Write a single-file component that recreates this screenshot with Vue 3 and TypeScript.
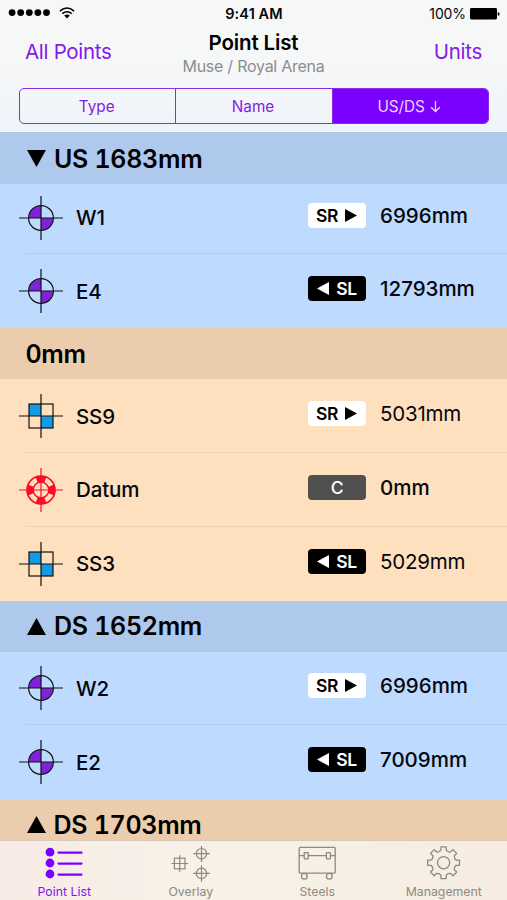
<script setup lang="ts">
type Side = 'SR' | 'SL' | 'C'
type Kind = 'round' | 'square' | 'datum'

interface Point {
  name: string
  kind: Kind
  side: Side
  distance: string
  light?: boolean
}

interface Section {
  title: string
  arrow?: 'down' | 'up'
  tone: 'blue' | 'peach'
  points: Point[]
}

const sections: Section[] = [
  {
    title: 'US 1683mm',
    arrow: 'down',
    tone: 'blue',
    points: [
      { name: 'W1', kind: 'round', side: 'SR', distance: '6996mm' },
      { name: 'E4', kind: 'round', side: 'SL', distance: '12793mm' },
    ],
  },
  {
    title: '0mm',
    tone: 'peach',
    points: [
      { name: 'SS9', kind: 'square', side: 'SR', distance: '5031mm', light: true },
      { name: 'Datum', kind: 'datum', side: 'C', distance: '0mm' },
      { name: 'SS3', kind: 'square', side: 'SL', distance: '5029mm', light: true },
    ],
  },
  {
    title: 'DS 1652mm',
    arrow: 'up',
    tone: 'blue',
    points: [
      { name: 'W2', kind: 'round', side: 'SR', distance: '6996mm' },
      { name: 'E2', kind: 'round', side: 'SL', distance: '7009mm' },
    ],
  },
  { title: 'DS 1703mm', arrow: 'up', tone: 'peach', points: [] },
]

// Eight-toothed gear outline centred on the origin, with rounded gullets
function gearPath(): string {
  const at = (r: number, deg: number): string => {
    const a = (deg * Math.PI) / 180
    return `${(r * Math.cos(a)).toFixed(2)} ${(r * Math.sin(a)).toFixed(2)}`
  }
  let d = ''
  for (let i = 0; i < 8; i++) {
    const c = i * 45 - 90
    d += `${i ? 'L' : 'M'}${at(12.8, c - 12)}L${at(16.1, c - 9.5)}L${at(16.1, c + 9.5)}`
    d += `L${at(12.8, c + 12)}Q${at(11.2, c + 22.5)} ${at(12.8, c + 33)}`
  }
  return d + 'Z'
}
const gear = gearPath()
</script>

<template>
  <div class="screen">
    <header class="top">
      <div class="status">
        <div class="carrier">
          <svg class="dots" width="42" height="8" viewBox="0 0 42 8">
            <circle v-for="i in 5" :key="i" :cx="4.1 + (i - 1) * 8.6" cy="3.6" r="3.4" />
          </svg>
          <svg class="wifi" width="16" height="12" viewBox="0 0 16 12">
            <path d="M.9 4.1Q8-2 15.1 4.1M3.3 6.7Q8 2.8 12.7 6.7" fill="none" stroke="#000" stroke-width="1.5" />
            <path d="M8 11.4L5.2 8.6Q8 6.5 10.8 8.6Z" />
          </svg>
        </div>
        <span class="clock">9:41 AM</span>
        <div class="power">
          <span>100%</span>
          <svg width="30" height="12" viewBox="0 0 30 12">
            <rect x="0" y="0" width="27" height="11.4" rx="1.4" />
            <path d="M27.8 4Q29.6 4.5 29.6 6T27.8 8Z" />
          </svg>
        </div>
      </div>
      <div class="nav">
        <a class="action">All Points</a>
        <div class="heading">
          <h1>Point List</h1>
          <p>Muse / Royal Arena</p>
        </div>
        <a class="action units">Units</a>
      </div>
      <div class="segments">
        <button>Type</button>
        <button>Name</button>
        <button class="on">US/DS <svg width="11" height="13" viewBox="0 0 11 13"><path d="M5.5 1V11.3M1.2 7.2L5.5 11.5L9.8 7.2" fill="none" stroke="currentColor" stroke-width="1.3" /></svg></button>
      </div>
    </header>

    <main class="list">
      <section v-for="s in sections" :key="s.title" :class="s.tone">
        <h2>
          <svg v-if="s.arrow" width="19" height="17" viewBox="0 0 19 17">
            <path :d="s.arrow === 'down' ? 'M0 0H19L9.5 17Z' : 'M0 17H19L9.5 0Z'" />
          </svg>
          <span>{{ s.title }}</span>
        </h2>
        <ul>
          <li v-for="p in s.points" :key="p.name">
            <svg class="marker" width="44" height="44" viewBox="-22 -22 44 44">
              <g v-if="p.kind === 'round'" stroke="#111" stroke-width="1.2">
                <path d="M0 0H-12A12 12 0 0 1 0-12ZM0 0H12A12 12 0 0 1 0 12Z" fill="#8022dc" stroke="none" />
                <circle r="12.4" fill="none" />
                <path d="M-22 0H22M0-22V22" />
              </g>
              <g v-else-if="p.kind === 'square'" stroke="#111" stroke-width="1.2">
                <path d="M-12-12H0V0H-12ZM0 0H12V12H0Z" fill="#149ae2" stroke="none" />
                <rect x="-12" y="-12" width="24" height="24" fill="none" />
                <path d="M-22 0H22M0-22V22" />
              </g>
              <g v-else stroke="#fb0d25" fill="none">
                <circle r="14" stroke-width="1.6" />
                <circle r="7.9" stroke-width="1.5" />
                <circle r="11" stroke-width="6.6" pathLength="360" stroke-dasharray="46 44" stroke-dashoffset="23" />
                <path d="M-22 0H22M0-22V22" stroke-width="1.2" />
              </g>
            </svg>
            <span class="name">{{ p.name }}</span>
            <div class="place">
              <span class="badge" :class="p.side.toLowerCase()">
                <svg v-if="p.side === 'SL'" width="12" height="13" viewBox="0 0 12 13"><path d="M12 0V13L0 6.5Z" fill="currentColor" /></svg>
                <span>{{ p.side }}</span>
                <svg v-if="p.side === 'SR'" width="12" height="13" viewBox="0 0 12 13"><path d="M0 0V13L12 6.5Z" fill="currentColor" /></svg>
              </span>
              <span class="distance" :class="{ light: p.light }">{{ p.distance }}</span>
            </div>
          </li>
        </ul>
      </section>
    </main>

    <footer class="tabs">
      <a class="tab active">
        <svg width="44" height="36" viewBox="0 0 44 36">
          <g fill="#7a00ff">
            <circle cx="8" cy="6.2" r="4.4" /><circle cx="8" cy="17" r="4.4" /><circle cx="8" cy="28" r="4.4" />
          </g>
          <path d="M16.5 6.7H39.5M16.5 17.6H39.5M16.5 28.6H39.5" stroke="#7a00ff" stroke-width="2.2" stroke-linecap="round" />
        </svg>
        <span>Point List</span>
      </a>
      <a class="tab">
        <svg width="44" height="36" viewBox="0 0 44 36" fill="none" stroke="#8d8981" stroke-width="1.2">
          <rect x="5.4" y="12.2" width="10.6" height="10.6" />
          <path d="M2.4 17.5H19M10.7 9.2V25.8" />
          <circle cx="32.5" cy="7.7" r="5.2" /><path d="M24.2 7.7H40.8M32.5-.5V16" />
          <circle cx="32.5" cy="27.4" r="5.2" /><path d="M24.2 27.4H40.8M32.5 19.2V35.7" />
        </svg>
        <span>Overlay</span>
      </a>
      <a class="tab">
        <svg width="44" height="36" viewBox="0 0 44 36" fill="none" stroke="#8d8981" stroke-width="1.3">
          <rect x="4.2" y="1.4" width="36" height="25.8" rx="1" />
          <path d="M4.2 9.6H9.2M13.2 9.6H31.4M35.4 9.6H40.2" />
          <rect x="9.2" y="6.6" width="4" height="6.2" rx=".5" /><rect x="31.4" y="6.6" width="4" height="6.2" rx=".5" />
          <circle cx="9.3" cy="30.2" r="2.9" /><circle cx="34.3" cy="30.2" r="2.9" />
        </svg>
        <span>Steels</span>
      </a>
      <a class="tab">
        <svg width="44" height="36" viewBox="0 0 44 36" fill="none" stroke="#8d8981" stroke-width="1.3" stroke-linejoin="round">
          <g transform="translate(21.6 16.7)"><path :d="gear" /><circle r="6.1" /></g>
        </svg>
        <span>Management</span>
      </a>
    </footer>
  </div>
</template>

<style>
body {
  margin: 0;
}
</style>

<style scoped>
.screen {
  width: 507px;
  height: 900px;
  display: flex;
  flex-direction: column;
  overflow: hidden;
  font-family: Inter, "Liberation Sans", sans-serif;
  color: #05070c;
}
.top {
  height: 133px;
  flex: none;
  box-sizing: border-box;
  border-bottom: 1px solid #b4c4d8;
  background: linear-gradient(#f7f7f7, #f6f7f8 50%, #eef4fa);
}
.status {
  height: 27px;
  display: grid;
  grid-template-columns: 1fr auto 1fr;
  align-items: center;
  padding: 0 7px 0 8px;
  box-sizing: border-box;
}
.carrier {
  display: flex;
  align-items: center;
  gap: 9px;
  padding-bottom: 2px;
}
.clock {
  font-size: 14.5px;
  font-weight: 600;
  letter-spacing: 0.1px;
}
.power {
  display: flex;
  align-items: center;
  justify-content: flex-end;
  gap: 4px;
  font-size: 14px;
  letter-spacing: -0.1px;
}
.nav {
  height: 61px;
  display: grid;
  grid-template-columns: 1fr auto 1fr;
  padding: 0 25px;
}
.action {
  color: #8519e6;
  font-size: 20.5px;
  line-height: 50px;
  letter-spacing: -0.3px;
}
.units {
  text-align: right;
}
.heading {
  text-align: center;
}
h1 {
  margin: 3px 0 0;
  font-size: 20.5px;
  font-weight: 600;
  line-height: 25px;
  letter-spacing: -0.15px;
  color: #000;
}
p {
  margin: 0;
  font-size: 16px;
  line-height: 22px;
  letter-spacing: -0.25px;
  color: #8c8d8e;
}
.segments {
  height: 36px;
  margin: 0 18px 0 19px;
  display: flex;
  box-sizing: border-box;
  border: 1.5px solid #8b2be8;
  border-radius: 5px;
  overflow: hidden;
}
button {
  flex: 1;
  padding: 0 2px 0 0;
  border: 0;
  background: none;
  font: 400 15.3px Inter, sans-serif;
  color: #8519e6;
}
button + button {
  border-left: 1px solid #8b2be8;
}
button.on {
  background: #7a00ff;
  color: #ead6ff;
}
button svg {
  margin-left: 1px;
  vertical-align: -1px;
}
.list {
  flex: 1;
  min-height: 0;
  overflow: hidden;
}
h2 {
  position: relative;
  z-index: 1;
  height: 51px;
  margin: 0;
  padding-left: 26px;
  display: flex;
  align-items: center;
  gap: 8px;
  font-size: 25px;
  font-weight: 600;
  letter-spacing: -0.3px;
  font-feature-settings: "tnum";
  color: #000;
}
h2 svg {
  padding-left: 1px;
}
ul {
  margin: 0;
  padding: 0;
  list-style: none;
}
section:first-child ul {
  margin-top: -3.4px;
}
.blue {
  background: #bedaff;
}
.blue h2 {
  background: #aec9ec;
}
.peach {
  background: #fedfbe;
}
.peach h2 {
  background: #ebcdae;
}
.peach h2 span {
  margin-left: -0.5px;
}
li {
  height: 73.8px;
  display: flex;
  align-items: center;
  padding-left: 19px;
  background: linear-gradient(rgba(60, 60, 90, 0.09), rgba(60, 60, 90, 0.09)) 26px 100% / 100% 1px no-repeat;
}
li:last-child {
  background: none;
}
.name {
  flex: 1;
  margin-left: 13px;
  font-size: 20.5px;
  font-weight: 500;
  letter-spacing: -0.15px;
}
.place {
  width: 199px;
  display: flex;
  align-items: center;
  gap: 14px;
  padding-bottom: 5px;
}
.badge {
  width: 58px;
  height: 25px;
  display: flex;
  align-items: center;
  justify-content: center;
  gap: 7px;
  border-radius: 4px;
  font-size: 17.5px;
  font-weight: 600;
  letter-spacing: -0.4px;
}
.sr {
  background: #fff;
  color: #000;
  padding-right: 1px;
  box-sizing: border-box;
}
.sl {
  background: #000;
  color: #fff;
}
.c {
  background: #505050;
  color: #fff;
  font-weight: 500;
}
.distance {
  font-size: 20.5px;
  font-weight: 500;
}
.light {
  font-weight: 400;
  letter-spacing: -0.2px;
}
.tabs {
  flex: none;
  height: 60px;
  box-sizing: border-box;
  border-top: 1px solid #d6c8b8;
  padding-left: 1px;
  display: grid;
  grid-template-columns: repeat(4, 126.5px);
  background: linear-gradient(90deg, #f8ebe5, #f7f1e8 35%, #f6f0e5 60%, #f7ece2);
}
.tab {
  display: flex;
  flex-direction: column;
  align-items: center;
  padding-top: 5px;
  font-size: 12.3px;
  line-height: 19px;
  color: #8d8981;
}
.active {
  color: #7f16ef;
}
</style>
